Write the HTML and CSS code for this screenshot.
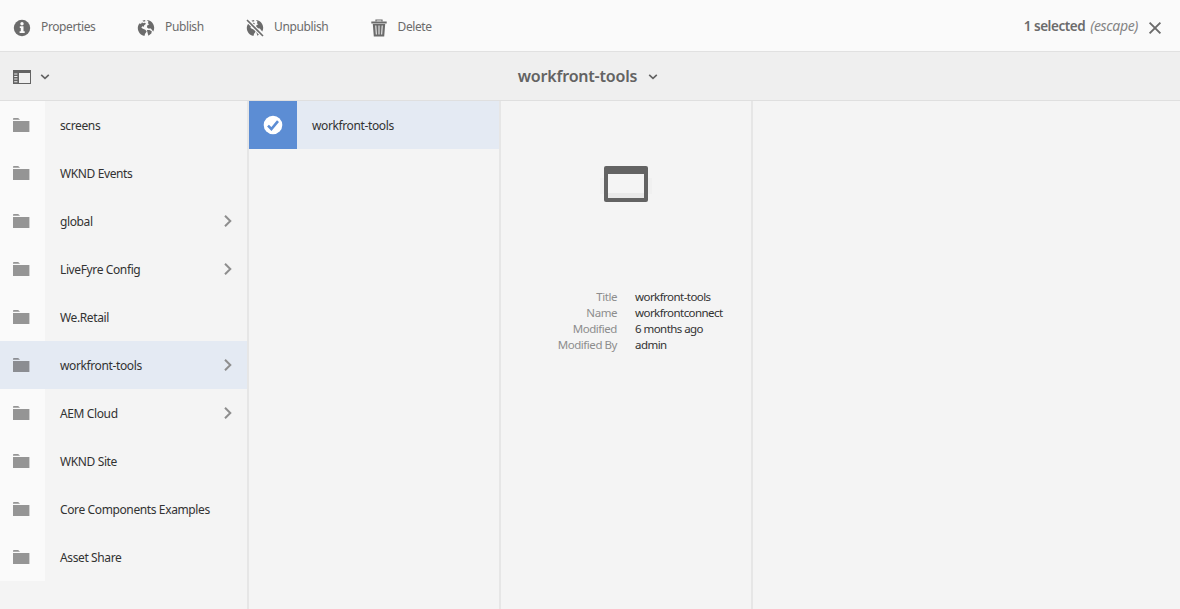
FILE: index.html
```html
<!DOCTYPE html>
<html lang="en">
<head>
<meta charset="utf-8">
<title>workfront-tools</title>
<link rel="stylesheet" href="styles.css">
</head>
<body>
<svg class="defs" aria-hidden="true">
  <symbol id="folder" viewBox="0 0 18 16"><path d="M1 1.8Q1 1 2 1H6.2L8 2.8H1Z"/><path d="M1 4H17.4V15H1Z"/></symbol>
  <symbol id="chevron" viewBox="0 0 10 14"><path d="M2 1.8L7.3 7L2 12.2" fill="none" stroke="currentColor" stroke-width="2"/></symbol>
  <symbol id="down" viewBox="0 0 10 8"><path d="M1.2 1.8L5 5.4L8.8 1.8" fill="none" stroke="currentColor" stroke-width="1.6"/></symbol>
  <symbol id="globe" viewBox="0 0 18 18"><path d="M2.7 4.2C1.4 5.5.8 7.3.8 9.1C.8 13 3.7 16.4 7.4 17.1L8.1 14.7L9.7 12.5L8.3 10.8L5.9 9.7L4.4 8.8L5.2 7.2L6.8 7.7L7.2 6.3L9.1 4.8L7.6 3.7L6 4.3L5.1 3.3L3.9 4.9Z"/><path d="M5.4 1.8L7.6 1L8.6 1.9L6.9 2.8Z"/><path d="M9.8.9C14.2 1.3 17.2 4.8 17.2 8.8C17.2 10.2 16.9 11.3 16.2 12.4L14.8 10.7L13.9 9.5L11.3 9.4L9.9 8.2L10.4 6.3L12.3 5.2L10.8 4.2L11.5 2.7Z"/><path d="M9.9 11.1L12.5 10.9L14.8 12.3L14.3 14.5L11.4 16.8L10.7 14.2Z"/></symbol>
</svg>
<header class="actions">
  <button class="action properties"><svg viewBox="0 0 18 18"><circle cx="9" cy="9" r="8.2"/><circle cx="9" cy="4.8" r="1.7" fill="#fafafa"/><path fill="#fafafa" d="M6.8 7.3H10.5V12.3H11.7V14H6.6V12.3H7.8V9H6.8Z"/></svg><span>Properties</span></button>
  <button class="action publish"><svg viewBox="0 0 18 18"><use href="#globe"/></svg><span>Publish</span></button>
  <button class="action unpublish"><svg viewBox="0 0 18 18"><use href="#globe"/><path d="M1 1L17 17" stroke="#fafafa" stroke-width="4"/><path d="M1 1L17 17" stroke="currentColor" stroke-width="1.6"/></svg><span>Unpublish</span></button>
  <button class="action delete"><svg viewBox="0 0 18 18"><path d="M6 2.6V1H12V2.6" fill="none" stroke="currentColor" stroke-width="1.2"/><path d="M1.3 2.5H16.7V4.4H1.3ZM2.8 5H15.2L14.2 17.4H3.8Z"/><path d="M5.8 6.5L6.3 15.5M9 6.5V15.5M12.2 6.5L11.7 15.5" stroke="#fafafa" stroke-width="1"/></svg><span>Delete</span></button>
  <div class="selection"><strong>1 selected</strong><em>(escape)</em><svg viewBox="0 0 14 14"><path d="M1.6 1.6L12.4 12.4M12.4 1.6L1.6 12.4" stroke="currentColor" stroke-width="1.9"/></svg></div>
</header>
<nav class="toolbar">
  <div class="rail"><svg class="rail-icon" viewBox="0 0 18 14"><path fill-rule="evenodd" d="M0 0H18V14H0ZM6 3V13H17V3ZM1.2 3.4V4.4H4.4V3.4ZM1.2 6V7H4.4V6ZM1.2 8.6V9.6H4.4V8.6ZM1.2 11.2V12.2H4.4V11.2Z"/></svg><svg class="down"><use href="#down"/></svg></div>
  <div class="title"><span>workfront-tools</span><svg class="down"><use href="#down"/></svg></div>
</nav>
<main class="columns">
  <section class="column first">
    <div class="item"><div class="thumb"><svg><use href="#folder"/></svg></div><span>screens</span></div>
    <div class="item"><div class="thumb"><svg><use href="#folder"/></svg></div><span>WKND Events</span></div>
    <div class="item"><div class="thumb"><svg><use href="#folder"/></svg></div><span>global</span><svg class="chevron"><use href="#chevron"/></svg></div>
    <div class="item"><div class="thumb"><svg><use href="#folder"/></svg></div><span>LiveFyre Config</span><svg class="chevron"><use href="#chevron"/></svg></div>
    <div class="item"><div class="thumb"><svg><use href="#folder"/></svg></div><span>We.Retail</span></div>
    <div class="item active"><div class="thumb"><svg><use href="#folder"/></svg></div><span>workfront-tools</span><svg class="chevron"><use href="#chevron"/></svg></div>
    <div class="item"><div class="thumb"><svg><use href="#folder"/></svg></div><span>AEM Cloud</span><svg class="chevron"><use href="#chevron"/></svg></div>
    <div class="item"><div class="thumb"><svg><use href="#folder"/></svg></div><span>WKND Site</span></div>
    <div class="item"><div class="thumb"><svg><use href="#folder"/></svg></div><span>Core Components Examples</span></div>
    <div class="item"><div class="thumb"><svg><use href="#folder"/></svg></div><span>Asset Share</span></div>
  </section>
  <section class="column second">
    <div class="item active"><div class="check"><svg viewBox="0 0 20 20"><circle cx="10" cy="10" r="9.3" fill="#fff"/><path d="M5 10.6L8.4 14L15 6.2" fill="none" stroke="#5c8dd4" stroke-width="2.6"/></svg></div><span>workfront-tools</span></div>
  </section>
  <section class="column preview">
    <svg class="page-icon" viewBox="0 0 52 38"><path d="M0 13H52V29H0Z" fill="#f0f0f0"/><rect x="4" y="1" width="44" height="36" rx="2" fill="#636363"/><path d="M8 9H44V33H8Z" fill="#f4f4f4"/><path d="M8 28H44V33H8Z" fill="#e9e9e9"/></svg>
    <dl class="details">
      <dt>Title</dt><dd>workfront-tools</dd>
      <dt>Name</dt><dd>workfrontconnect</dd>
      <dt>Modified</dt><dd>6 months ago</dd>
      <dt>Modified By</dt><dd>admin</dd>
    </dl>
  </section>
</main>
</body>
</html>
```
FILE: styles.css
```css
* { box-sizing: border-box; }
body {
  margin: 0;
  height: 609px;
  display: flex;
  flex-direction: column;
  overflow: hidden;
  background: #f4f4f4;
  color: #323232;
  font: 12px/16px "Noto Sans", sans-serif;
  letter-spacing: -0.38px;
}
svg { display: block; fill: currentColor; flex: none; }
.defs { display: none; }
.actions {
  height: 52px;
  flex: none;
  display: flex;
  align-items: center;
  padding: 5px 18px 0 13px;
  background: #fafafa;
  border-bottom: 1px solid #e1e1e1;
  color: #6b6b6b;
}
.action {
  display: flex;
  align-items: center;
  gap: 10px;
  padding: 0;
  border: 0;
  background: none;
  font: inherit;
  letter-spacing: inherit;
  color: #6b6b6b;
}
.action svg { width: 18px; height: 18px; }
.action span { padding-bottom: 2px; }
.properties { width: 124px; }
.publish { width: 109px; }
.unpublish { width: 123.5px; }
.selection {
  margin-left: auto;
  display: flex;
  align-items: center;
  font-size: 13.5px;
}
.selection strong, .selection em { padding-bottom: 4px; }
.selection strong { font-weight: 600; letter-spacing: -0.45px; }
.selection em { margin-left: 5px; color: #858585; font-size: 14px; letter-spacing: -0.35px; }
.selection svg { width: 14px; height: 14px; margin-left: 10px; }
.toolbar {
  height: 49px;
  flex: none;
  display: grid;
  grid-template-columns: 1fr auto 1fr;
  align-items: center;
  padding-left: 13px;
  padding-right: 17px;
  background: #efefef;
  border-bottom: 1px solid #dfdfdf;
  color: #636363;
}
.rail { display: flex; align-items: center; gap: 9px; padding-top: 2px; }
.rail-icon { width: 18px; height: 14px; }
.down { width: 10px; height: 8px; }
.title {
  display: flex;
  align-items: center;
  gap: 11px;
  font-size: 16px;
  font-weight: 600;
  letter-spacing: -0.2px;
}
.title .down { margin-top: 2px; }
.columns { flex: 1; display: flex; }
.column { border-right: 2px solid #e6e6e6; flex: none; }
.first { width: 249px; }
.second { width: 252px; }
.preview { width: 252px; padding-top: 64px; }
.item { height: 48px; display: flex; align-items: center; }
.item span { padding-left: 15px; margin-top: 2px; }
.active { background: #e4eaf3; }
.thumb {
  width: 45px;
  height: 48px;
  padding: 16px 0 0 12px;
  background: #fafafa;
  color: #959595;
}
.thumb svg { width: 18px; height: 16px; }
.active .thumb { background: none; color: #8b8d92; }
.chevron { width: 10px; height: 14px; margin: 0 14px 0 auto; color: #8e8e8e; }
.check {
  width: 48px;
  height: 48px;
  display: grid;
  place-items: center;
  background: #5c8dd4;
}
.check svg { width: 20px; height: 20px; }
.page-icon { width: 52px; height: 38px; margin: 0 auto; }
.details {
  display: grid;
  grid-template-columns: 116px auto;
  column-gap: 18px;
  margin: 86px 0 0;
  font-size: 11.5px;
  letter-spacing: -0.55px;
}
.details dt { color: #8d8d8d; text-align: right; letter-spacing: -0.45px; }
.details dd { margin: 0; }
```
